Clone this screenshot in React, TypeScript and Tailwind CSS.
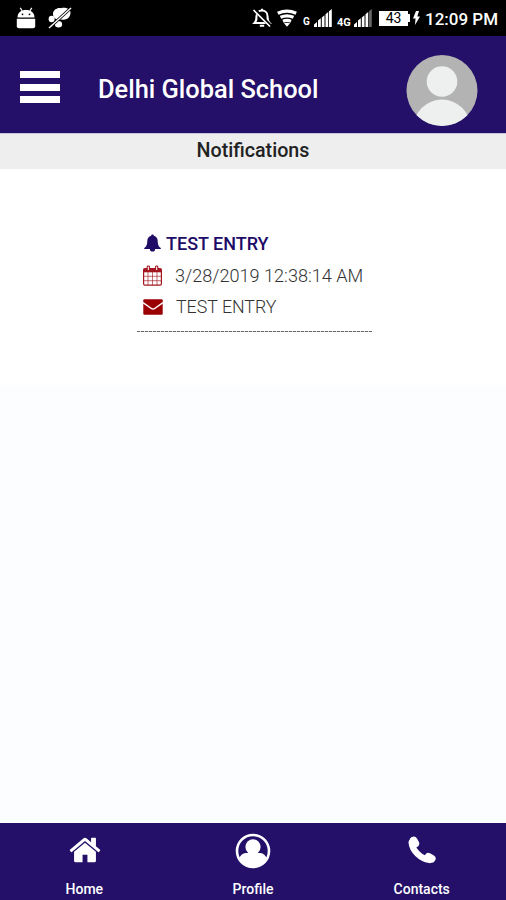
import type { ReactNode } from "react";

const HomeIcon = () => (
  <svg viewBox="0 0 1792 1792" className="ml-0.5 h-[34px] w-[34px]" fill="currentColor">
    <path d="M1472 992v480q0 26-19 45t-45 19h-384v-384h-256v384h-384q-26 0-45-19t-19-45v-480q0-1 .5-3t.5-3l575-474 575 474q1 2 1 6zm223-69l-62 74q-8 9-21 11h-3q-13 0-21-7l-692-577-692 577q-12 8-24 7-13-2-21-11l-62-74q-8-10-7-23.5t11-21.5l719-599q32-26 76-26t76 26l244 204v-195q0-14 9-23t23-9h192q14 0 23 9t9 23v408l219 182q10 8 11 21.5t-7 23.5z" />
  </svg>
);

const ProfileIcon = () => (
  <svg viewBox="0 0 36 36" className="h-9 w-9" fill="currentColor">
    <circle cx="18" cy="18" r="16" fill="none" stroke="currentColor" strokeWidth="2.600" />
    <circle cx="18" cy="13.8" r="7.6" />
    <path d="M4 25.500c1.500-2.800 3-5.300 7-5.600h3.500q3.500 1.800 7 0H25c4 .3 5.500 2.800 7 5.600A16 16 0 0 1 4 25.500z" />
  </svg>
);

const PhoneIcon = () => (
  <svg viewBox="0 0 28 28" className="mt-[3px] h-7 w-7" fill="currentColor">
    <path
      d="M3.600 6.500C4.200 14.500 12.500 22.500 21.500 24"
      fill="none"
      stroke="currentColor"
      strokeWidth="6.200"
      strokeLinecap="round"
    />
    <path
      d="M5.600 4.500 7.300 7.500M20.500 20.800 23.700 22.600"
      fill="none"
      stroke="currentColor"
      strokeWidth="7.800"
      strokeLinecap="round"
    />
  </svg>
);

const BellIcon = () => (
  <svg viewBox="0 0 17 18" className="h-[18px] w-[17px]" fill="currentColor">
    <path d="M8.500.5c.8 0 1.300.5 1.300 1.300C12.400 2.500 13.700 4.500 13.700 7c0 4 1 5.600 3.100 7v1H.2v-1c2.100-1.400 3.100-3 3.100-7 0-2.500 1.300-4.500 3.900-5.200C7.200 1 7.700.5 8.500.5z" />
    <path d="M5.900 15h5.200a2.600 2.600 0 0 1-5.200 0z" />
  </svg>
);

const CalendarIcon = () => (
  <svg viewBox="0 0 19 21" className="-mt-0.5 h-[21px] w-[19px]" fill="none" stroke="currentColor">
    <rect x=".6" y="3.600" width="17.800" height="16.500" rx="1.300" strokeWidth="1.200" />
    <path d="M.6 4h17.800v3.300H.6z" fill="currentColor" stroke="none" />
    <path d="M5 7v13M9.500 7v13M14 7v13M1 11.300h17M1 15.700h17" strokeWidth=".8" opacity=".8" />
    <rect x="4.200" y="1" width="2.200" height="4.500" rx=".8" fill="white" strokeWidth="1.100" />
    <rect x="12.600" y="1" width="2.200" height="4.500" rx=".8" fill="white" strokeWidth="1.100" />
  </svg>
);

const EnvelopeIcon = () => (
  <svg viewBox="0 0 20 16" className="h-4 w-5" fill="currentColor">
    <rect x=".3" y=".3" width="19.400" height="15.400" rx="1" />
    <path d="M0 3.700 8.300 9.500Q10 10.700 11.700 9.500L20 3.700" fill="none" stroke="white" strokeWidth="1.500" />
  </svg>
);

const AndroidIcon = () => (
  <svg viewBox="0 0 20 22" className="h-[22px] w-5" fill="white">
    <path d="m4.200.8 2 3M15.800.8l-2 3" stroke="white" strokeWidth="1.200" />
    <path d="M1.500 10.500C1.500 5.500 5 3 10 3s8.500 2.500 8.500 7.500z" />
    <path d="M.8 11.700h18.400v7.500a2 2 0 0 1-2 2H2.800a2 2 0 0 1-2-2z" />
    <circle cx="6.500" cy="7.300" r=".9" fill="black" />
    <circle cx="13.500" cy="7.300" r=".9" fill="black" />
  </svg>
);

const CleanerIcon = () => (
  <svg viewBox="0 0 24 22" className="h-[22px] w-6" fill="white">
    <path d="M5 7C5 3 9 .6 13 1.200 17 0 23 2 22.500 6c-.3 5-4.500 7.500-9 6.500-4 1-8.500-1-8.500-5.500z" />
    <ellipse cx="3.600" cy="12" rx="3" ry="3.200" />
    <ellipse cx="10.500" cy="17.300" rx="3.600" ry="3.200" />
    <path d="M1 21 23 1" stroke="black" strokeWidth="3" />
    <path d="M1 21 23 1" stroke="white" strokeWidth="1.400" />
  </svg>
);

const BellOffIcon = () => (
  <svg viewBox="0 0 20 20" className="h-5 w-5" fill="none" stroke="white" strokeWidth="2">
    <path d="M2.500 15h15C15.500 13 15.500 12 15.500 8c0-3.500-2.500-5.500-5.500-5.500S4.500 4.500 4.500 8c0 4 0 5-2 7z" />
    <path d="M10 .8v2M7.800 17.700h4.400" />
    <path d="M2.500 1.500 19 18.500" stroke="black" strokeWidth="3.500" />
    <path d="M1.500 2 18 18.500" strokeWidth="1.700" />
  </svg>
);

const WifiIcon = () => (
  <svg viewBox="0 0 20 18" className="h-[18px] w-5" fill="none" stroke="white" strokeWidth="3.200">
    <path d="M.8 4.300Q10-.2 19.200 4.300M3.500 8.300Q10 5.500 16.500 8.300M6 12.200q4-1.600 8 0" />
    <path d="m7 14.300 3 3.500 3-3.500q-3-1.200-6 0z" fill="white" stroke="none" />
  </svg>
);

const SignalIcon = ({ weak = false }: { weak?: boolean }) => (
  <svg viewBox="0 0 18 18" className="h-[18px] w-[18px]" fill="white">
    <path d="M0 15.500 3 13v5H0zM4 11.500l2.800-2.300V18H4zM7.800 8.500l2.700-2.300V18H7.800zM11.500 5.300l2.700-2.200V18h-2.700z" />
    <path d="m15 2.200 2.800-2.200v18H15z" opacity={weak ? 0.4 : 1} />
  </svg>
);

function StatusBar() {
  return (
    <div className="flex h-9 items-center bg-black text-white">
      <div className="ml-4 flex items-center gap-3">
        <AndroidIcon />
        <CleanerIcon />
      </div>
      <div className="ml-auto flex items-center pr-2">
        <BellOffIcon />
        <div className="mr-1.5 ml-[5px]">
          <WifiIcon />
        </div>
        <span className="w-[11px] pt-2 text-[10px] leading-none font-bold">G</span>
        <SignalIcon />
        <span className="ml-[5px] w-[17px] pt-2 text-[11px] leading-none font-bold">4G</span>
        <SignalIcon weak />
        <div className="ml-[7px] flex h-[15px] w-[29px] items-center justify-center bg-white text-[14px] text-black">
          43
        </div>
        <div className="h-2 w-0.5 bg-white" />
        <svg viewBox="0 0 7 14" className="ml-[3px] h-3.5 w-[7px]" fill="white">
          <path d="M3 0 0 7.500h2.500L2 14l5-8.500H4.300L6 0z" />
        </svg>
        <span className="mt-[3px] ml-[5px] w-[73px] text-[17px] leading-none font-medium whitespace-nowrap">
          12:09 PM
        </span>
      </div>
    </div>
  );
}

function Header() {
  return (
    <header className="flex h-[97px] items-center bg-[#240f69] text-white">
      <div className="mt-[5px] ml-5 flex w-10 flex-col gap-[5.500px]">
        <div className="h-[7px] bg-white" />
        <div className="h-[7px] bg-white" />
        <div className="h-[7px] bg-white" />
      </div>
      <h1 className="mt-[11px] ml-[38px] text-[25.400px] leading-none font-medium whitespace-nowrap">
        Delhi Global School
      </h1>
      <svg viewBox="0 0 72 72" className="mt-3 mr-7 ml-auto h-[72px] w-[72px]">
        <defs>
          <clipPath id="avatar">
            <circle cx="36" cy="35.500" r="35.500" />
          </clipPath>
        </defs>
        <g clipPath="url(#avatar)">
          <rect width="72" height="72" fill="#b3b3b3" />
          <circle cx="36" cy="26.500" r="15.300" fill="#eeefef" />
          <circle cx="36" cy="73" r="28.500" fill="#eeefef" />
        </g>
      </svg>
    </header>
  );
}

function NavItem({ label, children }: { label: string; children: ReactNode }) {
  return (
    <div className="flex flex-1 flex-col items-center justify-between pt-2.5 pb-1">
      {children}
      <span className="text-[14px] leading-none font-medium">{label}</span>
    </div>
  );
}

export default function App() {
  return (
    <div className="flex h-[900px] w-[506px] flex-col overflow-hidden bg-[#fcfdfe] font-['Roboto',sans-serif]">
      <StatusBar />
      <Header />

      <div className="flex h-9 items-center justify-center border-t border-[#c9c7dc] bg-[#eeeeee] pb-px text-[19.700px] leading-none font-medium text-[#222222]">
        Notifications
      </div>

      <main className="h-[216px] bg-white pt-[62px] pl-[137px]">
        <div className="w-[235px]">
          <div className="flex h-6 items-center gap-[5px] pl-[7px] text-[#200b66]">
            <BellIcon />
            <span className="text-[18px] font-medium">TEST ENTRY</span>
          </div>
          <div className="mt-[9px] flex h-6 items-center gap-[13px] pl-1.5 text-[#a31820]">
            <CalendarIcon />
            <span className="text-[18.100px] font-light whitespace-nowrap text-[#333333]">
              3/28/2019 12:38:14 AM
            </span>
          </div>
          <div className="mt-[7px] flex h-6 items-center gap-[13px] pl-1.5 text-[#9b0003]">
            <EnvelopeIcon />
            <span className="text-[17.800px] font-light text-[#333333]">TEST ENTRY</span>
          </div>
          <div className="mt-3 h-px bg-[repeating-linear-gradient(90deg,#666666_0_3px,#dddddd_3px_4px)]" />
        </div>
      </main>

      <nav className="mt-auto flex h-[77px] bg-[#240f69] text-white">
        <NavItem label="Home">
          <HomeIcon />
        </NavItem>
        <NavItem label="Profile">
          <ProfileIcon />
        </NavItem>
        <NavItem label="Contacts">
          <PhoneIcon />
        </NavItem>
      </nav>
    </div>
  );
}
